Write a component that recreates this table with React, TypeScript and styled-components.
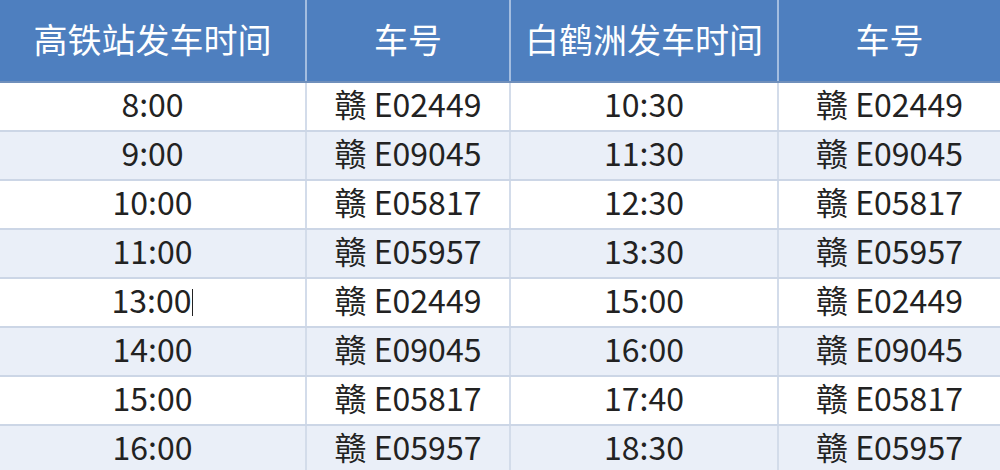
import styled, { createGlobalStyle } from "styled-components";

const GlobalStyle = createGlobalStyle`
  html, body {
    margin: 0;
    padding: 0;
    background: #ffffff;
  }
  body {
    font-family: "Noto Sans CJK SC", "Noto Sans", sans-serif;
  }
`;

const Sheet = styled.div`
  width: 1000px;
  height: 470px;
  overflow: hidden;
  background: #ffffff;
`;

const Table = styled.table`
  width: 1000px;
  border-collapse: collapse;
  table-layout: fixed;
`;

const HeadCell = styled.th`
  height: 77px;
  padding: 0 0 4px;
  background: #4e7fbf;
  color: #ffffff;
  font-size: 34px;
  font-weight: 400;
  text-align: center;
  border-left: 2px solid #a3bde0;
  border-bottom: 2px solid #6f8fbb;
  &:first-child {
    border-left: none;
  }
`;

const Row = styled.tr<{ striped: boolean }>`
  background: ${({ striped }) => (striped ? "#eaeff8" : "#ffffff")};
`;

const Cell = styled.td`
  height: 41px;
  padding: 0 0 6px;
  color: #222222;
  font-size: 32px;
  text-align: center;
  line-height: 41px;
  border-left: 2px solid #d3dcea;
  border-bottom: 2px solid #ccd6e6;
  &:first-child {
    border-left: none;
  }
`;

const Caret = styled.span`
  display: inline-block;
  width: 1px;
  height: 27px;
  margin-left: 1px;
  vertical-align: -3px;
  background: #222222;
`;

const columns = [
  { title: "高铁站发车时间", width: 306 },
  { title: "车号", width: 204 },
  { title: "白鹤洲发车时间", width: 268 },
  { title: "车号", width: 222 },
];

const rows = [
  ["8:00", "E02449", "10:30", "E02449"],
  ["9:00", "E09045", "11:30", "E09045"],
  ["10:00", "E05817", "12:30", "E05817"],
  ["11:00", "E05957", "13:30", "E05957"],
  ["13:00", "E02449", "15:00", "E02449"],
  ["14:00", "E09045", "16:00", "E09045"],
  ["15:00", "E05817", "17:40", "E05817"],
  ["16:00", "E05957", "18:30", "E05957"],
];

export default function App() {
  return (
    <Sheet>
      <GlobalStyle />
      <Table>
        <colgroup>
          {columns.map((c, i) => (
            <col key={i} style={{ width: c.width }} />
          ))}
        </colgroup>
        <thead>
          <tr>
            {columns.map((c, i) => (
              <HeadCell key={i}>{c.title}</HeadCell>
            ))}
          </tr>
        </thead>
        <tbody>
          {rows.map((r, i) => (
            <Row key={i} striped={i % 2 === 1}>
              <Cell>
                {r[0]}
                {/* stray text cursor left in the original sheet */}
                {i === 4 ? <Caret /> : null}
              </Cell>
              <Cell>赣 {r[1]}</Cell>
              <Cell>{r[2]}</Cell>
              <Cell>赣 {r[3]}</Cell>
            </Row>
          ))}
        </tbody>
      </Table>
    </Sheet>
  );
}
